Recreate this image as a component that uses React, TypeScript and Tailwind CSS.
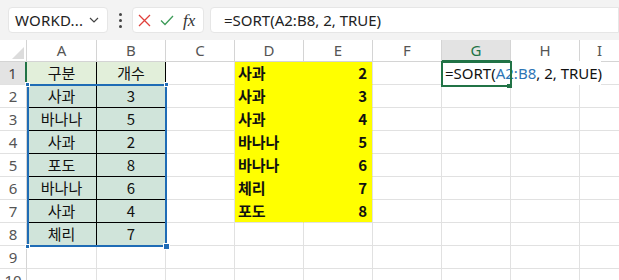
import React from 'react';

const COLS = ['A', 'B', 'C', 'D', 'E', 'F', 'G', 'H', 'I'];
const WIDTHS = ['w-[70px]', 'w-[69px]', 'w-[69px]', 'w-[69px]', 'w-[69px]', 'w-[69px]', 'w-[69px]', 'w-[69px]', 'w-[40px]'];

const source: [string, string][] = [
  ['사과', '3'],
  ['바나나', '5'],
  ['사과', '2'],
  ['포도', '8'],
  ['바나나', '6'],
  ['사과', '4'],
  ['체리', '7'],
];

const sorted: [string, string][] = [
  ['사과', '2'],
  ['사과', '3'],
  ['사과', '4'],
  ['바나나', '5'],
  ['바나나', '6'],
  ['체리', '7'],
  ['포도', '8'],
];

const cellFont = { fontFamily: '"Noto Sans CJK KR", "Noto Sans", sans-serif' };

function Cell({ row, col }: { row: number; col: number }) {
  const w = WIDTHS[col];
  // A1:B1 header
  if (row === 1 && col < 2) {
    return (
      <div className={`${w} h-full shrink-0 flex items-center justify-center bg-[#e2efda] border-r border-black text-[15px] text-[#111]`} style={cellFont}>
        {col === 0 ? '구분' : '개수'}
      </div>
    );
  }
  if (row >= 2 && row <= 8 && col < 2) {
    const v = source[row - 2][col];
    return (
      <div className={`${w} h-full shrink-0 flex items-center justify-center bg-[#d0e4da] border-r border-b border-black text-[15px] text-[#111]`} style={cellFont}>
        {v}
      </div>
    );
  }
  if (row >= 1 && row <= 7 && (col === 3 || col === 4)) {
    const v = sorted[row - 1][col - 3];
    const last = row === 7;
    return (
      <div
        className={`${w} h-full shrink-0 flex items-center bg-[#ffff00] font-bold text-[15px] text-[#111] ${col === 3 ? 'justify-start pl-[3px] border-r border-[#ffff00]' : 'justify-end pr-[5px] border-r border-[#e1e1e1]'} ${last ? 'border-b border-b-[#e1e1e1]' : 'border-b border-b-[#ffff00]'}`}
        style={cellFont}
      >
        {v}
      </div>
    );
  }
  return <div className={`${w} h-full shrink-0 border-r border-b border-[#e1e1e1]`} />;
}

export default function App() {
  const rows = [1, 2, 3, 4, 5, 6, 7, 8, 9, 10];
  return (
    <div className="w-[619px] h-[280px] overflow-hidden bg-white relative" style={{ fontFamily: '"Noto Sans", "Open Sans", sans-serif' }}>
      {/* toolbar */}
      <div className="h-[40px] bg-[#f3f3f3] flex items-center pl-[8px] gap-[6px]">
        <div className="w-[100px] h-[26px] bg-white rounded-[4px] border border-[#e6e6e6] flex items-center pl-[6px] pr-[8px] justify-between">
          <span className="text-[15px] text-[#222] tracking-[0.2px]">WORKD...</span>
          <svg width="10" height="6" viewBox="0 0 10 6" fill="none" stroke="#444" strokeWidth="1.2">
            <path d="M1 1l4 4 4-4" />
          </svg>
        </div>
        <div className="w-[12px] flex flex-col items-center gap-[3px]">
          <span className="w-[3px] h-[3px] bg-[#444] rounded-full" />
          <span className="w-[3px] h-[3px] bg-[#444] rounded-full" />
          <span className="w-[3px] h-[3px] bg-[#444] rounded-full" />
        </div>
        <div className="w-[72px] h-[26px] bg-white rounded-[4px] border border-[#e6e6e6] flex items-center pl-[5px] gap-[9px]">
          <svg width="13" height="13" viewBox="0 0 13 13" stroke="#e0403c" strokeWidth="1.3">
            <path d="M1 1l11 11M12 1L1 12" />
          </svg>
          <svg width="14" height="11" viewBox="0 0 14 11" fill="none" stroke="#3d9b58" strokeWidth="1.3">
            <path d="M1 5.5l4 4L13 1" />
          </svg>
          <span className="text-[17px] italic text-[#333] leading-none" style={{ fontFamily: '"Liberation Serif", serif' }}>fx</span>
        </div>
        <div className="flex-1 h-[26px] bg-white rounded-l-[4px] border border-[#e6e6e6] flex items-center pl-[13px]">
          <span className="text-[15px] text-[#222]">=SORT(A2:B8, 2, TRUE)</span>
        </div>
      </div>

      <div className="relative">
        {/* column header row */}
        <div className="flex h-[22px] bg-white">
          <div className="w-[27px] h-full shrink-0 border-r border-b border-[#d4d4d4] relative">
            <svg className="absolute right-[2px] bottom-[2px]" width="12" height="12" viewBox="0 0 12 12">
              <path d="M12 0V12H0Z" fill="#dcdcdc" />
            </svg>
          </div>
          {COLS.map((c, i) => (
            <div
              key={c}
              className={`${WIDTHS[i]} h-full shrink-0 flex items-center justify-center text-[15px] border-r border-[#d4d4d4] ${c === 'G' ? 'bg-[#e3e3e3] text-[#217346] border-b-2 border-b-[#217346]' : 'text-[#555] border-b border-b-[#d4d4d4]'}`}
            >
              {c}
            </div>
          ))}
        </div>

        {rows.map(r => (
          <div key={r} className="flex h-[23px]">
            <div
              className={`w-[27px] h-full shrink-0 flex items-center justify-center text-[15px] border-b border-[#e1e1e1] ${r === 1 ? 'bg-[#e3e3e3] border-r-2 border-r-[#217346] text-[#444]' : 'border-r border-r-[#d4d4d4] text-[#555]'}`}
            >
              {r}
            </div>
            {COLS.map((c, i) => (
              <Cell key={c} row={r} col={i} />
            ))}
          </div>
        ))}

        {/* selection A2:B8 */}
        <div className="absolute left-[27px] top-[44px] w-[140px] h-[163px] border-2 border-[#1f6cb5] pointer-events-none" />
        <div className="absolute left-[25px] top-[42px] w-[5px] h-[5px] bg-[#1f6cb5] border border-white" />
        <div className="absolute left-[164px] top-[42px] w-[5px] h-[5px] bg-[#1f6cb5] border border-white" />
        <div className="absolute left-[25px] top-[204px] w-[5px] h-[5px] bg-[#1f6cb5] border border-white" />
        <div className="absolute left-[163px] top-[203px] w-[7px] h-[7px] bg-[#1f6cb5] border border-white" />

        {/* active cell G1 editing */}
        <div className="absolute left-[441px] top-[21px] w-[160px] h-[24px] bg-white flex items-center pl-[4px]">
          <span className="text-[15px] text-[#111] whitespace-nowrap">
            =SORT(<span className="text-[#2e75b6]">A2:B8</span>, 2, TRUE)
          </span>
          <span className="w-[1px] h-[19px] bg-black ml-[1px]" />
        </div>
        <div className="absolute left-[441px] top-[21px] w-[71px] h-[26px] border-2 border-[#217346] pointer-events-none" />
        <div className="absolute left-[507px] top-[44px] w-[5px] h-[4px] bg-[#217346]" />
      </div>
    </div>
  );
}
